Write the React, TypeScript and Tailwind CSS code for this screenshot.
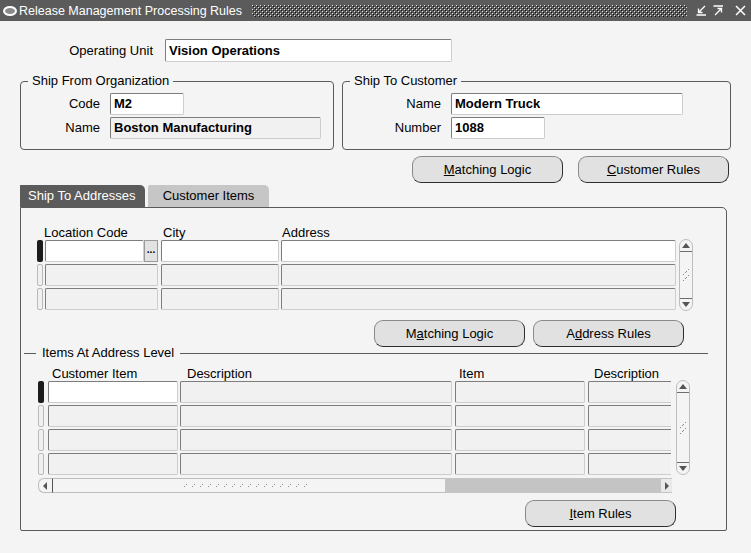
import React from "react";

type FieldProps = { className?: string; value?: string; white?: boolean };

function Field({ className = "", value = "", white = false }: FieldProps) {
  return (
    <div
      className={`h-[22px] shrink-0 flex items-center pl-[3px] rounded-[2px] border border-t-[#7d7d7d] border-l-[#7d7d7d] border-r-[#cdcdcd] border-b-[#cdcdcd] text-[13px] font-bold text-black ${
        white ? "bg-white" : "bg-[#f1f1f1]"
      } ${className}`}
    >
      {value}
    </div>
  );
}

function Btn({ children, className = "" }: { children: React.ReactNode; className?: string }) {
  return (
    <div
      className={`w-[151px] h-[27px] shrink-0 flex items-center justify-center rounded-[9px] border border-[#8a8a8a] border-r-[#2e2e2e] border-b-[#2e2e2e] bg-[#e1e1e1] text-[13px] text-black ${className}`}
    >
      {children}
    </div>
  );
}

function Indicator({ active = false }: { active?: boolean }) {
  return (
    <div
      className={`w-[6px] h-[22px] shrink-0 rounded-[2px] ${
        active ? "bg-[#1c1c1c]" : "border border-[#b9b9b9] bg-[#f0f0f0]"
      }`}
    />
  );
}

function Grip({ vertical = false }: { vertical?: boolean }) {
  // small diagonal tick marks used as scroll thumb grip
  const marks = vertical
    ? [
        [4, 0],
        [1, 3],
        [4, 6],
        [1, 9],
      ]
    : Array.from({ length: 16 }, (_, i) => [i * 8, 0]);
  return (
    <svg width={vertical ? 8 : 130} height={vertical ? 12 : 4}>
      {marks.map(([x, y], i) => (
        <g key={i} fill="#8a8a8a">
          <rect x={x + 2} y={y} width="1" height="1" />
          <rect x={x} y={y + 2} width="1" height="1" />
        </g>
      ))}
    </svg>
  );
}

function VScroll({ className = "" }: { className?: string }) {
  return (
    <div
      className={`w-[14px] shrink-0 flex flex-col items-stretch rounded-[7px] border border-[#bdbdbd] ${className}`}
    >
      <div className="h-[12px] flex items-center justify-center border-b border-[#6e6e6e]">
        <svg width="8" height="5">
          <path d="M0 5 L4 0 L8 5 Z" fill="#555" />
        </svg>
      </div>
      <div className="flex-1 flex items-center justify-center">
        <Grip vertical />
      </div>
      <div className="h-[12px] flex items-center justify-center border-t border-[#6e6e6e]">
        <svg width="8" height="5">
          <path d="M0 0 L8 0 L4 5 Z" fill="#555" />
        </svg>
      </div>
    </div>
  );
}

function GroupBox({
  title,
  className = "",
  children,
}: {
  title: string;
  className?: string;
  children: React.ReactNode;
}) {
  return (
    <fieldset className={`shrink-0 rounded-[4px] border border-[#5a5a5a] pt-[5px] pb-[10px] ${className}`}>
      <legend className="ml-[7px] px-[4px] text-[13px] leading-[14px]">{title}</legend>
      {children}
    </fieldset>
  );
}

export default function App() {
  return (
    <div className="w-[751px] h-[553px] bg-[#f4f4f4] flex flex-col overflow-hidden font-['Liberation_Sans',_Arial,_sans-serif] text-black text-[13px]">
      {/* Title bar */}
      <div className="h-[21px] shrink-0 bg-[#5b5b5b] flex items-center pl-[3px] pr-[5px] text-white">
        <svg width="14" height="10" className="shrink-0">
          <ellipse cx="7" cy="5" rx="6" ry="4" fill="#8a8a8a" stroke="#fff" strokeWidth="2" />
        </svg>
        <span className="ml-[2px] text-[12.5px] leading-[14px] whitespace-nowrap">Release Management Processing Rules</span>
        <svg className="ml-[10px] mr-[9px] flex-1 h-[12px]">
          <defs>
            <pattern id="grip" width="4" height="4" patternUnits="userSpaceOnUse">
              <rect x="0" y="0" width="1" height="1" fill="#e6e6e6" />
              <rect x="1" y="1" width="1" height="1" fill="#111" />
              <rect x="2" y="2" width="1" height="1" fill="#e6e6e6" />
              <rect x="3" y="3" width="1" height="1" fill="#111" />
            </pattern>
          </defs>
          <rect width="100%" height="12" fill="url(#grip)" />
        </svg>
        <div className="flex items-center gap-[6px] shrink-0">
          <svg width="11" height="11" stroke="#fff" strokeWidth="1.3" fill="none">
            <path d="M9 1 L2.5 7.5 M2.5 3.5 V7.5 H6.5 M0.5 10 H10" />
          </svg>
          <svg width="11" height="11" stroke="#fff" strokeWidth="1.3" fill="none">
            <path d="M0.5 1 H10 M2 10 L8.5 3.5 M4.5 3.5 H8.5 V7.5" />
          </svg>
          <svg width="11" height="11" stroke="#fff" strokeWidth="1.5" fill="none" className="ml-[5px]">
            <path d="M1 1 L10 10 M10 1 L1 10" />
          </svg>
        </div>
      </div>

      {/* Body */}
      <div className="flex flex-col pl-[20px]">
        {/* Operating unit */}
        <div className="flex items-center mt-[18px] gap-[12px]">
          <span className="w-[133px] text-right">Operating Unit</span>
          <Field className="w-[287px] h-[23px]" value="Vision Operations" white />
        </div>

        {/* Groups */}
        <div className="flex mt-[12px] gap-[8px]">
          <GroupBox title="Ship From Organization" className="w-[314px]">
            <div className="flex flex-col gap-[2px]">
              <div className="flex items-center gap-[10px]">
                <span className="w-[79px] text-right">Code</span>
                <Field className="w-[74px]" value="M2" white />
              </div>
              <div className="flex items-center gap-[10px]">
                <span className="w-[79px] text-right">Name</span>
                <Field className="w-[211px]" value="Boston Manufacturing" />
              </div>
            </div>
          </GroupBox>
          <GroupBox title="Ship To Customer" className="w-[389px]">
            <div className="flex flex-col gap-[2px]">
              <div className="flex items-center gap-[10px]">
                <span className="w-[98px] text-right">Name</span>
                <Field className="w-[232px]" value="Modern Truck" white />
              </div>
              <div className="flex items-center gap-[10px]">
                <span className="w-[98px] text-right">Number</span>
                <Field className="w-[94px]" value="1088" white />
              </div>
            </div>
          </GroupBox>
        </div>

        {/* Header buttons */}
        <div className="flex mt-[6px] ml-[392px] gap-[15px]">
          <Btn>
            <u>M</u>atching Logic
          </Btn>
          <Btn>
            <u>C</u>ustomer Rules
          </Btn>
        </div>

        {/* Tabs */}
        <div className="flex mt-[2px] gap-[3px] h-[22px]">
          <div className="w-[125px] bg-[#5b5b5b] text-white rounded-tr-[5px] flex items-center pl-[8px] whitespace-nowrap">
            Ship To Addresses
          </div>
          <div className="w-[121px] bg-[#c6c6c6] rounded-tr-[5px] rounded-tl-[2px] flex items-center justify-center whitespace-nowrap">
            Customer Items
          </div>
        </div>

        {/* Tab panel */}
        <div className="w-[707px] h-[324px] border border-[#5a5a5a] rounded-tr-[5px] rounded-b-[2px] flex flex-col">
          {/* Address block */}
          <div className="flex flex-col pl-[16px] pt-[16px]">
            <div className="flex h-[16px] items-end leading-[14px]">
              <span className="ml-[7px] w-[119px]">Location Code</span>
              <span className="w-[119px]">City</span>
              <span>Address</span>
            </div>
            <div className="flex">
              <div className="flex flex-col gap-[2px]">
                <div className="flex">
                  <Indicator active />
                  <Field className="ml-[2px] w-[99px]" white />
                  <div className="w-[14px] h-[22px] border border-[#9a9a9a] bg-[#e2e2e2] flex items-center justify-center text-[10px] font-bold leading-[8px] pb-[3px]">
                    ...
                  </div>
                  <Field className="ml-[3px] w-[118px]" white />
                  <Field className="ml-[2px] w-[395px]" white />
                </div>
                {[0, 1].map((i) => (
                  <div className="flex" key={i}>
                    <Indicator />
                    <Field className="ml-[2px] w-[113px]" />
                    <Field className="ml-[3px] w-[118px]" />
                    <Field className="ml-[2px] w-[395px]" />
                  </div>
                ))}
              </div>
              <VScroll className="ml-[3px] h-[72px] -mt-[1px]" />
            </div>
          </div>

          <div className="flex mt-[9px] ml-[353px] gap-[8px]">
            <Btn>
              M<u>a</u>tching Logic
            </Btn>
            <Btn>
              A<u>d</u>dress Rules
            </Btn>
          </div>

          {/* Items at address level */}
          <div className="flex items-center h-[12px] ml-[3px] w-[684px]">
            <div className="w-[12px] h-px bg-[#5a5a5a]" />
            <span className="px-[6px] leading-[14px] whitespace-nowrap">Items At Address Level</span>
            <div className="flex-1 h-px bg-[#5a5a5a]" />
          </div>

          <div className="flex flex-col pl-[17px] mt-[6px]">
            <div className="flex h-[16px] items-end leading-[14px]">
              <span className="ml-[14px] w-[135px]">Customer Item</span>
              <span className="w-[272px]">Description</span>
              <span className="w-[135px]">Item</span>
              <span>Description</span>
            </div>
            <div className="flex">
              <div className="flex flex-col gap-[2px]">
                {[0, 1, 2, 3].map((i) => (
                  <div className="flex" key={i}>
                    <Indicator active={i === 0} />
                    <Field className="ml-[4px] w-[130px]" white={i === 0} />
                    <Field className="ml-[2px] w-[272px]" />
                    <Field className="ml-[3px] w-[130px]" />
                    <Field className="ml-[3px] w-[83px] border-r-0 rounded-r-none" />
                  </div>
                ))}
              </div>
              <VScroll className="ml-[5px] h-[95px] -mt-[1px]" />
            </div>
            {/* horizontal scrollbar */}
            <div className="flex mt-[3px] w-[634px] h-[15px]">
              <div className="w-[14px] flex items-center pl-[4px] rounded-l-[6px] border border-r-0 border-[#bdbdbd]">
                <svg width="4" height="8">
                  <path d="M4 0 L0 4 L4 8 Z" fill="#555" />
                </svg>
              </div>
              <div className="w-[393px] border-y border-[#bdbdbd] border-l border-l-[#555] flex items-center justify-center">
                <Grip />
              </div>
              <div className="flex-1 bg-[#c4c4c4]" />
              <div className="w-[11px] bg-[#e9e9e9] border-y border-[#c4c4c4] flex items-center justify-center">
                <svg width="4" height="8">
                  <path d="M0 0 L4 4 L0 8 Z" fill="#555" />
                </svg>
              </div>
            </div>
          </div>

          <div className="flex mt-[7px] ml-[504px]">
            <Btn>
              <u>I</u>tem Rules
            </Btn>
          </div>
        </div>
      </div>
    </div>
  );
}
